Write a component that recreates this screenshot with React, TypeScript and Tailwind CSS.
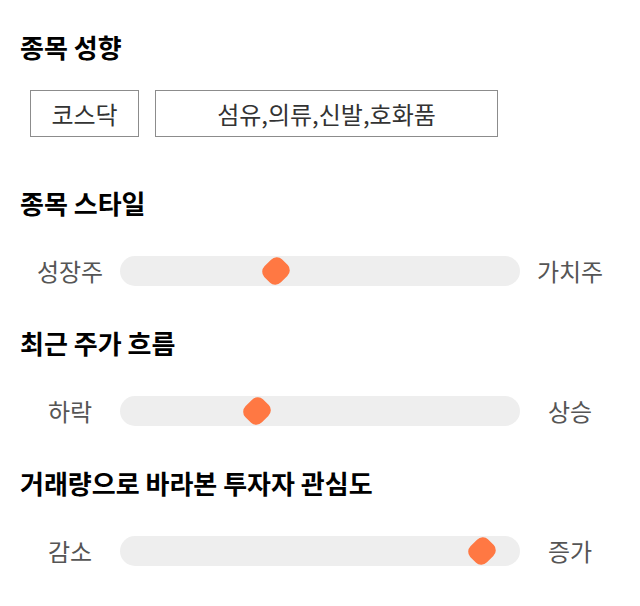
const font = { fontFamily: '"Noto Sans CJK KR", "Noto Sans", sans-serif' };

const sliders = [
  { title: "종목 스타일", left: "성장주", right: "가치주", value: 39 },
  { title: "최근 주가 흐름", left: "하락", right: "상승", value: 34.25 },
  { title: "거래량으로 바라본 투자자 관심도", left: "감소", right: "증가", value: 90.5 },
];

function Slider({ left, right, value }: { left: string; right: string; value: number }) {
  return (
    <div className="flex h-[30px] items-center">
      <div className="w-[100px] text-center text-[24px] leading-[30px] text-[#555]">{left}</div>
      <div className="relative h-[30px] flex-1 rounded-full bg-[#eeeeee]">
        {/* thumb: rounded diamond */}
        <div
          className="absolute top-1/2 h-[25px] w-[25px] -translate-x-1/2 -translate-y-1/2 scale-x-[0.92] rotate-45 rounded-[8px] bg-[#ff7843]"
          style={{ left: `${value}%` }}
        />
      </div>
      <div className="w-[100px] text-center text-[24px] leading-[30px] text-[#555]">{right}</div>
    </div>
  );
}

export default function App() {
  return (
    <div className="min-h-[606px] w-[640px] bg-white px-5 pt-[33px]" style={font}>
      <h2 className="text-[26px] font-bold leading-[28px] text-black">종목 성향</h2>
      <div className="mt-[29px] flex gap-4 pl-[10px]">
        <div className="flex h-[47px] w-[109px] items-center justify-center border border-[#8c8c8c] text-[24px] text-[#333]">
          코스닥
        </div>
        <div className="flex h-[47px] w-[343px] items-center justify-center border border-[#8c8c8c] text-[24px] text-[#333]">
          섬유,의류,신발,호화품
        </div>
      </div>

      {sliders.map((s, i) => (
        <div key={s.title} className={i === 0 ? "mt-[52px]" : "mt-[43px]"}>
          <h2 className="text-[26px] font-bold leading-[28px] text-black">{s.title}</h2>
          <div className="mt-[39px]">
            <Slider left={s.left} right={s.right} value={s.value} />
          </div>
        </div>
      ))}
    </div>
  );
}
